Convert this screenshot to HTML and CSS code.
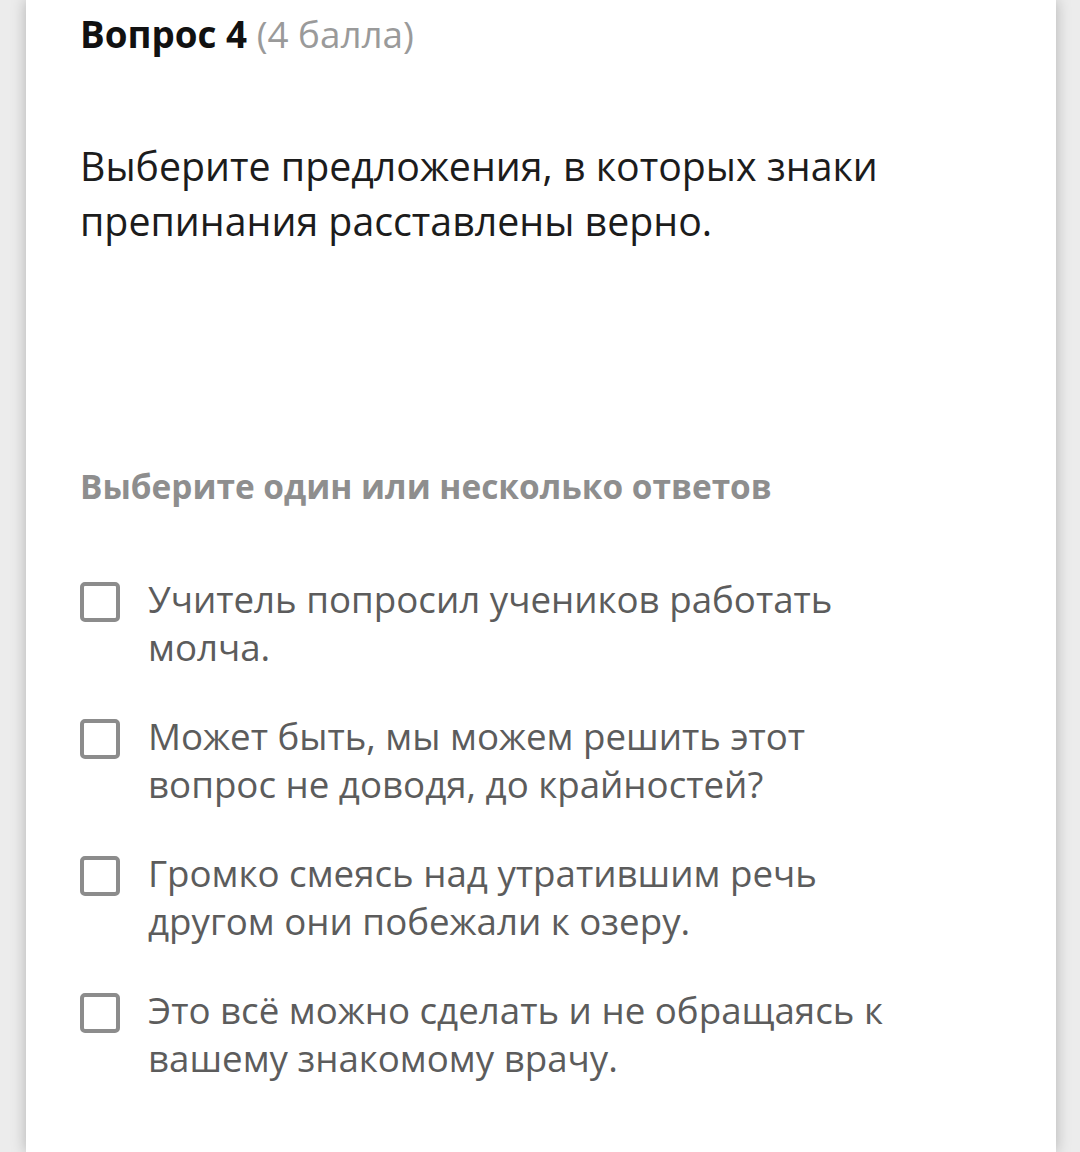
FILE: index.html
```html
<!DOCTYPE html>
<html lang="ru">
<head>
    <meta charset="UTF-8">
    <meta name="viewport" content="width=device-width, initial-scale=1.0">
    <title>Вопрос 4</title>
    <link rel="stylesheet" href="styles.css">
</head>
<body>
    <div class="card">
        <h2 class="question-title">Вопрос 4 <span class="points">(4 балла)</span></h2>

        <p class="question-text">Выберите предложения, в которых знаки препинания расставлены верно.</p>

        <p class="hint">Выберите один или несколько ответов</p>

        <ul class="answers">
            <li class="answer"><span class="box"></span><span class="label">Учитель попросил учеников работать молча.</span></li>
            <li class="answer"><span class="box"></span><span class="label">Может быть, мы можем решить этот вопрос не доводя, до крайностей?</span></li>
            <li class="answer"><span class="box"></span><span class="label">Громко смеясь над утратившим речь другом они побежали к озеру.</span></li>
            <li class="answer"><span class="box"></span><span class="label">Это всё можно сделать и не обращаясь к вашему знакомому врачу.</span></li>
        </ul>
    </div>
</body>
</html>
```

FILE: styles.css
```css
body {
    font-family: "Open Sans", "Noto Sans", Arial, sans-serif;
    background-color: #ececec;
    margin: 0;
    padding: 0;
}
.card {
    background-color: #fff;
    margin: 0 24px 0 26px;
    padding: 12px 54px 60px 54px;
    min-height: 1152px;
    box-sizing: border-box;
    box-shadow: 0 0 14px rgba(0, 0, 0, 0.25);
}
.question-title {
    font-size: 36.8px;
    line-height: 44px;
    font-weight: 700;
    color: #111;
    margin: 0;
}
.points {
    font-weight: 400;
    color: #9a9a9a;
}
.question-text {
    font-size: 39.3px;
    line-height: 55px;
    color: #1c1c1c;
    margin: 83px 0 0 0;
    max-width: 840px;
}
.hint {
    font-size: 33.4px;
    line-height: 44px;
    font-weight: 700;
    color: #8e8e8e;
    margin: 215px 0 0 0;
}
.answers {
    list-style: none;
    margin: 67px 0 0 0;
    padding: 0;
    display: flex;
    flex-direction: column;
    gap: 41px;
}
.answer {
    display: flex;
    align-items: flex-start;
    gap: 28px;
}
.box {
    flex: none;
    width: 40px;
    height: 40px;
    margin-top: 7px;
    border: 4px solid #8c8c8c;
    border-radius: 5px;
    box-sizing: border-box;
}
.label {
    font-size: 36.7px;
    line-height: 48px;
    color: #5c5c5c;
    max-width: 770px;
}
```
